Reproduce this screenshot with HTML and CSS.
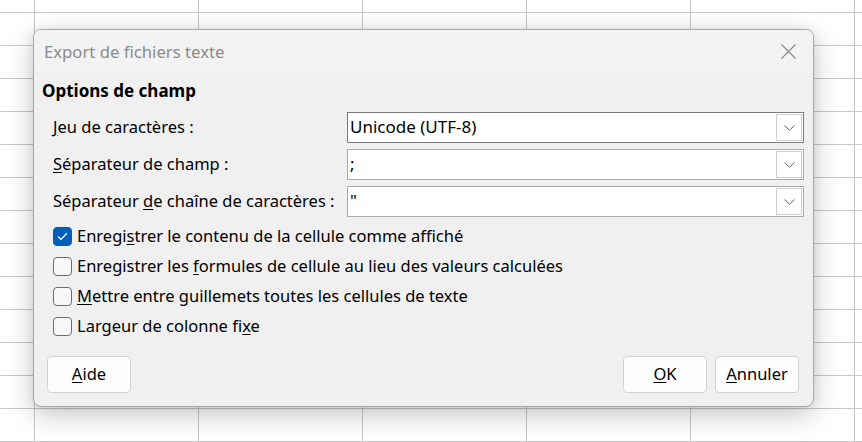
FILE: index.html
```html
<!DOCTYPE html>
<html lang="fr">
<head>
<meta charset="utf-8">
<title>Export de fichiers texte</title>
<link rel="stylesheet" href="styles.css">
</head>
<body>
<div class="dialog">
  <div class="titlebar">
    <span class="title">Export de fichiers texte</span>
    <span class="close">
      <svg width="15" height="15" viewBox="0 0 15 15"><path d="M0.5 0.5 L14.5 14.5 M14.5 0.5 L0.5 14.5" stroke="#8a8a8a" stroke-width="1.1" fill="none"/></svg>
    </span>
  </div>
  <div class="body">
    <div class="heading">Options de champ</div>
    <div class="fields">
      <label class="label"><u>J</u>eu de caractères :</label>
      <div class="combo focused"><span class="value">Unicode (UTF-8)</span><span class="drop"><svg width="11" height="6" viewBox="0 0 11 6"><path d="M0.5 0.5 L5.5 5.2 L10.5 0.5" stroke="#606060" stroke-width="1" fill="none"/></svg></span></div>
      <label class="label"><u>S</u>éparateur de champ :</label>
      <div class="combo"><span class="value">;</span><span class="drop"><svg width="11" height="6" viewBox="0 0 11 6"><path d="M0.5 0.5 L5.5 5.2 L10.5 0.5" stroke="#606060" stroke-width="1" fill="none"/></svg></span></div>
      <label class="label">Séparateur <u>d</u>e chaîne de caractères :</label>
      <div class="combo"><span class="value">"</span><span class="drop"><svg width="11" height="6" viewBox="0 0 11 6"><path d="M0.5 0.5 L5.5 5.2 L10.5 0.5" stroke="#606060" stroke-width="1" fill="none"/></svg></span></div>
    </div>
    <div class="checks">
      <div class="check"><span class="box checked"><svg width="11" height="9" viewBox="0 0 11 9"><path d="M1 4.6 L4 7.4 L10 1.2" stroke="#fff" stroke-width="1.3" fill="none"/></svg></span><span>Enregi<u>s</u>trer le contenu de la cellule comme affiché</span></div>
      <div class="check"><span class="box"></span><span>Enregistrer les <u>f</u>ormules de cellule au lieu des valeurs calculées</span></div>
      <div class="check"><span class="box"></span><span><u>M</u>ettre entre guillemets toutes les cellules de texte</span></div>
      <div class="check"><span class="box"></span><span>Largeur de colonne fi<u>x</u>e</span></div>
    </div>
    <div class="buttons">
      <button class="btn"><u>A</u>ide</button>
      <span class="spacer"></span>
      <button class="btn"><u>O</u>K</button>
      <button class="btn"><u>A</u>nnuler</button>
    </div>
  </div>
</div>
</body>
</html>
```
FILE: styles.css
```css
html, body {
  margin: 0;
  padding: 0;
}
body {
  width: 862px;
  height: 442px;
  overflow: hidden;
  background-color: #ffffff;
  background-image:
    linear-gradient(to right, #c6c6c6 1px, transparent 1px),
    linear-gradient(to bottom, #c6c6c6 1px, transparent 1px);
  background-size: 164px 33px;
  background-position: 34px 12px;
  font-family: "Noto Sans", "Liberation Sans", sans-serif;
  font-size: 16.5px;
  color: #000;
  padding-top: 29px;
  padding-left: 33px;
  box-sizing: border-box;
}
.dialog {
  width: 781px;
  height: 378px;
  box-sizing: border-box;
  border: 1px solid #a8a8a8;
  border-radius: 8px;
  background: #f0f0f0;
  box-shadow: 0 8px 28px rgba(0,0,0,0.22), 0 0 10px rgba(0,0,0,0.08);
  display: flex;
  flex-direction: column;
  overflow: hidden;
}
.titlebar {
  height: 42px;
  background: #f3f3f3;
  display: flex;
  align-items: center;
  padding-left: 10px;
  padding-right: 17px;
  flex-shrink: 0;
}
.title {
  color: #8c8c8c;
  font-size: 16.7px;
  flex: 1;
}
.close {
  width: 15px;
  height: 15px;
  display: flex;
}
.body {
  flex: 1;
  padding: 8px 9px 0 8px;
  display: flex;
  flex-direction: column;
}
.heading {
  font-weight: bold;
  font-size: 17px;
  line-height: 22px;
  height: 22px;
}
.fields {
  margin-top: 10px;
  margin-left: 11px;
  display: grid;
  grid-template-columns: 294px 457px;
  grid-auto-rows: 31px;
  row-gap: 6px;
  align-items: center;
}
.label {
  line-height: 20px;
  margin-top: -2px;
}
.combo {
  height: 31px;
  box-sizing: border-box;
  border: 1px solid #ababab;
  background: #fff;
  display: flex;
  align-items: stretch;
}
.combo.focused {
  border-color: #7a7a80;
}
.value {
  flex: 1;
  padding-left: 2px;
  padding-bottom: 2px;
  display: flex;
  align-items: center;
  font-size: 17px;
}
.drop {
  width: 24px;
  margin: 1px;
  border: 1px solid #cfcfcf;
  background: #fff;
  display: flex;
  align-items: center;
  justify-content: center;
}
.checks {
  margin-top: 4px;
  margin-left: 11px;
  display: flex;
  flex-direction: column;
}
.check {
  height: 30px;
  display: flex;
  align-items: center;
  gap: 5px;
}
.check > span:last-child {
  margin-top: -2px;
}
.box {
  width: 19px;
  height: 19px;
  box-sizing: border-box;
  border: 1px solid #6e6e6e;
  border-radius: 4px;
  background: #f8f8f8;
  display: flex;
  align-items: center;
  justify-content: center;
}
.box.checked {
  background: #005fb8;
  border-color: #005fb8;
}
.buttons {
  margin-top: 15px;
  margin-left: 5px;
  margin-right: 5px;
  display: flex;
  gap: 8px;
}
.spacer {
  flex: 1;
}
.btn {
  width: 84px;
  height: 37px;
  box-sizing: border-box;
  border: 1px solid #d2d2d2;
  border-radius: 4px;
  background: #fdfdfd;
  font-family: inherit;
  font-size: 16.5px;
  color: #000;
  padding: 0 0 2px 0;
}
u {
  text-underline-offset: 2px;
}
```
